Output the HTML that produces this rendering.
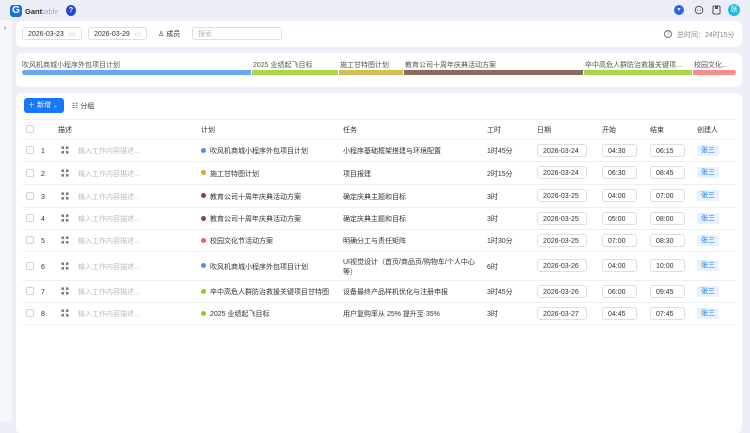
<!DOCTYPE html>
<html><head><meta charset="utf-8"><style>
*{box-sizing:border-box;margin:0;padding:0}
body{width:750px;height:421px;overflow:hidden;background:#eceff7;font-family:"Liberation Sans","Noto Sans CJK SC",sans-serif;font-size:7px;color:#333;position:relative}
.a{position:absolute;white-space:nowrap;line-height:10px}
.panel{position:absolute;left:16px;width:726px;background:#fff;border-radius:5px}
.inp{position:absolute;border:1px solid #dcdfe6;border-radius:3px;background:#fff;height:13px;line-height:13px;padding-left:5px;font-size:7px;color:#333}
.cb{position:absolute;left:26px;width:8px;height:8px;border:1px solid #d0d3da;border-radius:2px;background:#fff}
.line{position:absolute;left:22px;width:714px;height:1px;background:#eef0f3}
.dot{position:absolute;width:5px;height:5px;border-radius:50%}
.tag{position:absolute;left:697px;width:22px;height:11px;background:#e6f2ff;color:#1677ff;border-radius:2px;text-align:center;line-height:12px;font-size:7px}
.g{color:#bbb}
.seg{position:absolute;top:70px;height:5px}
.lab{position:absolute;top:61px;color:#555;font-size:7px;line-height:10px;white-space:nowrap;overflow:hidden}
</style></head><body>
<div class="a" style="left:10px;top:5px;width:12px;height:12px;background:#1a6fe0;border-radius:3px;color:#fff;font-weight:bold;font-size:10px;line-height:12px;text-align:center">G</div>
<div class="a" style="left:25px;top:7px;font-size:7.5px;font-weight:bold;color:#333">Gant<span style="color:#8fb0e6;font-weight:normal">table</span></div>
<div class="a" style="left:66px;top:5px;width:10px;height:11px;background:#2a45c8;border-radius:50%;color:#fff;font-size:7px;text-align:center;line-height:11px;font-weight:bold">?</div>
<div class="a" style="left:674px;top:5px;width:10px;height:10px;background:#2c64f0;border-radius:50%;color:#fff;font-size:6px;text-align:center;line-height:10px">▾</div>
<svg class="a" style="left:694px;top:5px" width="10" height="10" viewBox="0 0 10 10"><circle cx="5" cy="5" r="3.8" fill="none" stroke="#555" stroke-width="1"/><circle cx="3.5" cy="5" r=".6" fill="#555"/><circle cx="6.5" cy="5" r=".6" fill="#555"/></svg>
<svg class="a" style="left:712px;top:5px" width="9" height="10" viewBox="0 0 9 10"><rect x="1" y="1" width="7" height="8" rx="1" fill="none" stroke="#555" stroke-width="1.1"/><rect x="3" y="1" width="3" height="3" fill="#555"/></svg>
<div class="a" style="left:728px;top:4px;width:12px;height:12px;background:#22b8e8;border-radius:50%;color:#fff;font-size:7px;text-align:center;line-height:12px">张</div>
<div class="a" style="left:0;top:20px;width:12px;height:401px;background:#f7f8fb"></div>
<div class="a" style="left:4px;top:24px;font-size:7px;color:#555">›</div>
<div class="panel" style="top:21px;height:26px"></div>
<div class="inp" style="left:22px;top:27px;width:60px">2026-03-23 <span style="color:#bbb;margin-left:3px">▭</span></div>
<div class="inp" style="left:88px;top:27px;width:59px">2026-03-29 <span style="color:#bbb;margin-left:3px">▭</span></div>
<div class="a" style="left:158px;top:30px;color:#333">♙ 成员</div>
<div class="inp" style="left:192px;top:27px;width:90px;color:#bbb">搜索</div>
<div class="a" style="left:664px;top:30px;width:8px;height:8px;border:1px solid #777;border-radius:50%;font-size:6px;line-height:6px;text-align:center;color:#777">?</div>
<div class="a" style="left:677px;top:31px;color:#888">总时间：24时15分</div>
<div class="panel" style="top:53px;height:34px"></div>
<div class="lab" style="left:22px;width:228px">吹风机商城小程序外包项目计划</div>
<div class="lab" style="left:253px;width:84px">2025 业绩起飞目标</div>
<div class="lab" style="left:340px;width:62px">施工甘特图计划</div>
<div class="lab" style="left:405px;width:178px">教育公司十周年庆典活动方案</div>
<div class="lab" style="left:585px;width:106px">卒中高危人群防治救援关键项...</div>
<div class="lab" style="left:694px;width:42px">校园文化...</div>
<div class="seg" style="left:22px;width:229px;background:#6aa6f8;border-radius:3px 0 0 3px"></div>
<div class="seg" style="left:252px;width:86px;background:#a8d84a"></div>
<div class="seg" style="left:339px;width:64px;background:#d2be55"></div>
<div class="seg" style="left:404px;width:179px;background:#8c6b5e"></div>
<div class="seg" style="left:584px;width:108px;background:#a8d84a"></div>
<div class="seg" style="left:693px;width:43px;background:#fb8c8c;border-radius:0 3px 3px 0"></div>
<div class="panel" style="top:93px;height:340px"></div>
<div class="a" style="left:24px;top:98px;width:40px;height:15px;background:#1677ff;border-radius:3px;color:#fff;line-height:16px;padding-left:4px">＋ 新增 <span style="font-size:6px">⌄</span></div>
<div class="a" style="left:72px;top:102px;color:#333">☷ 分组</div>
<div class="line" style="top:119px"></div>
<div class="line" style="top:139px"></div>
<div class="cb" style="top:125px"></div>
<div class="a" style="left:58px;top:126px">描述</div>
<div class="a" style="left:201px;top:126px">计划</div>
<div class="a" style="left:343px;top:126px">任务</div>
<div class="a" style="left:487px;top:126px">工时</div>
<div class="a" style="left:537px;top:126px">日期</div>
<div class="a" style="left:602px;top:126px">开始</div>
<div class="a" style="left:650px;top:126px">结束</div>
<div class="a" style="left:697px;top:126px">创建人</div>
<div id="rows"></div>
<script>
var R=[[139,161,"#4f8df5","吹风机商城小程序外包项目计划","小程序基础框架搭建与环境配置","1时45分","2026-03-24","04:30","06:15"],
[161,184,"#c9b030","施工甘特图计划","项目报建","2时15分","2026-03-24","06:30","08:45"],
[184,207,"#7a4b3c","教育公司十周年庆典活动方案","确定庆典主题和目标","3时","2026-03-25","04:00","07:00"],
[207,229,"#7a4b3c","教育公司十周年庆典活动方案","确定庆典主题和目标","3时","2026-03-25","05:00","08:00"],
[229,251,"#f0606a","校园文化节活动方案","明确分工与责任矩阵","1时30分","2026-03-25","07:00","08:30"],
[251,280,"#4f8df5","吹风机商城小程序外包项目计划","UI视觉设计（首页/商品页/购物车/个人中心<br>等）","6时","2026-03-26","04:00","10:00"],
[280,302,"#8ccf20","卒中高危人群防治救援关键项目甘特图","设备最终产品样机优化与注册申报","3时45分","2026-03-26","06:00","09:45"],
[302,324,"#8ccf20","2025 业绩起飞目标","用户复购率从 25% 提升至 35%","3时","2026-03-27","04:45","07:45"]];
var ic='<svg width="8" height="8" viewBox="0 0 8 8" fill="none" stroke="#666" stroke-width="0.9"><path d="M1 3V1h2M7 3V1H5M1 5v2h2M7 5v2H5M1 1l2 2M7 1L5 3M1 7l2-2M7 7L5 5"/></svg>';
var h="";R.forEach(function(r,i){var c=(r[0]+r[1])/2;var t=c-3;
h+='<div class="line" style="top:'+r[1]+'px"></div>';
h+='<div class="cb" style="top:'+(c-4)+'px"></div>';
h+='<div class="a" style="left:41px;top:'+t+'px">'+(i+1)+'</div>';
h+='<div class="a" style="left:61px;top:'+(c-4)+'px;line-height:8px">'+ic+'</div>';
h+='<div class="a g" style="left:78px;top:'+t+'px">输入工作内容描述...</div>';
h+='<div class="dot" style="left:201px;top:'+(c-2.5)+'px;background:'+r[2]+'"></div>';
h+='<div class="a" style="left:210px;top:'+t+'px">'+r[3]+'</div>';
var tt=r[4].indexOf("<br>")>0?c-8:t;
h+='<div class="a" style="left:343px;top:'+tt+'px;line-height:10px">'+r[4]+'</div>';
h+='<div class="a" style="left:487px;top:'+t+'px">'+r[5]+'</div>';
h+='<div class="inp" style="left:537px;top:'+(c-6.5)+'px;width:50px">'+r[6]+'</div>';
h+='<div class="inp" style="left:602px;top:'+(c-6.5)+'px;width:35px">'+r[7]+'</div>';
h+='<div class="inp" style="left:650px;top:'+(c-6.5)+'px;width:35px">'+r[8]+'</div>';
h+='<div class="tag" style="top:'+(c-5.5)+'px">张三</div>';});
document.getElementById("rows").innerHTML=h;
</script>
</body></html>
